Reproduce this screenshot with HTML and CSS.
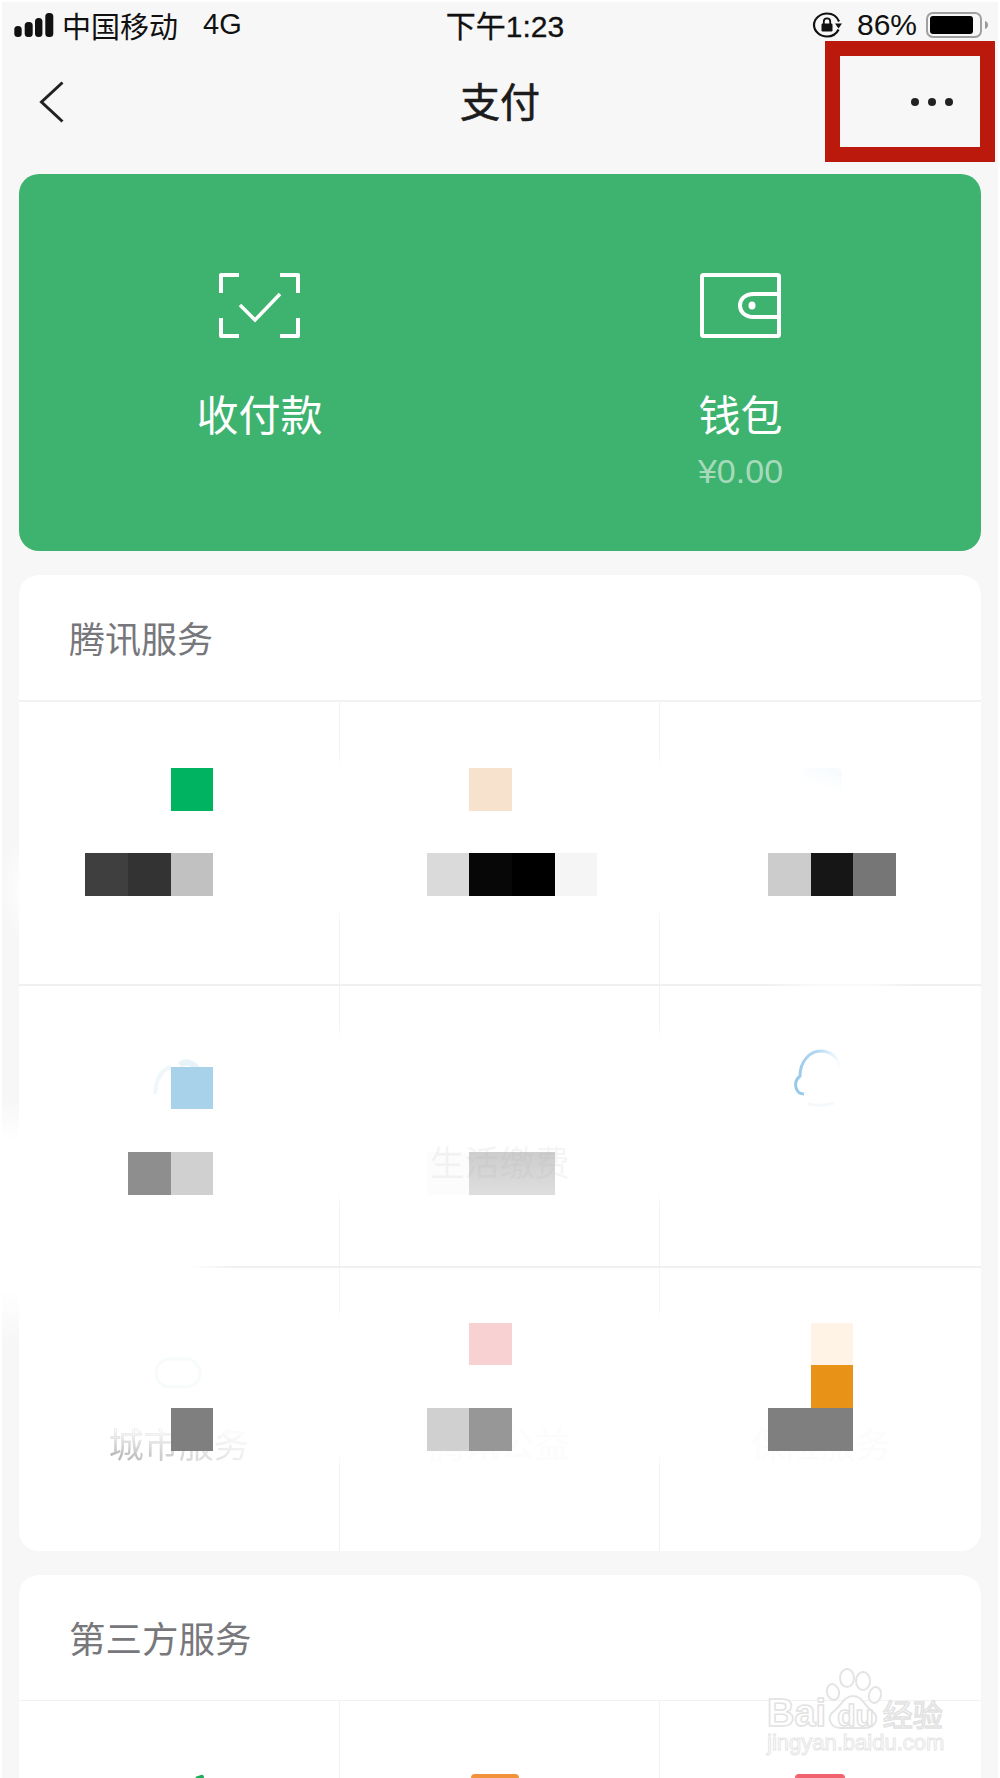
FILE: index.html
```html
<!DOCTYPE html>
<html lang="zh-CN">
  <head>
    <meta charset="UTF-8" />
    <meta name="viewport" content="width=device-width, initial-scale=1.0" />
    <title>支付</title>
    <link rel="stylesheet" href="styles.css">
  </head>
  <body>
    <div class="page">
      <div class="status-bar">
        <div class="status-left">
          <svg class="signal" width="40" height="24" viewBox="0 0 40 24">
            <rect x="0.3" y="13" width="7.4" height="11" rx="3.5" />
            <rect x="10.7" y="9" width="8" height="15" rx="3.5" />
            <rect x="21" y="5" width="7.4" height="19" rx="3.5" />
            <rect x="31.3" y="0" width="8" height="24" rx="3.5" />
          </svg>
          <span>中国移动</span>
          <span class="network">4G</span>
        </div>
        <div class="status-time">下午1:23</div>
        <div class="status-right">
          <svg class="lock" width="30" height="26" viewBox="0 0 30 26">
            <path d="M27 9.5C25 4.5 20.5 1.5 15 1.5 7.8 1.5 2 7 2 13s5.8 11.5 13 11.5c5 0 9.5-2.8 11.6-7" fill="none" stroke="#111" stroke-width="2.2" />
            <path d="M23 11.5h7l-3.5 5z" fill="#111" />
            <rect x="9.5" y="11.5" width="11" height="8" rx="1.2" fill="#111" />
            <path d="M11.8 12V9.5a3.2 3.2 0 0 1 6.4 0V12" fill="none" stroke="#111" stroke-width="1.8" />
          </svg>
          <span class="battery-text">86%</span>
          <svg class="battery" width="62" height="26" viewBox="0 0 62 26">
            <rect x="1" y="1" width="54" height="24" rx="6" fill="none" stroke="#a0a0a0" stroke-width="2" />
            <rect x="4" y="4" width="43" height="18" rx="3" fill="#000" />
            <path d="M59 9c1.8.5 3 2 3 4s-1.2 3.5-3 4z" fill="#9a9a9a" />
          </svg>
        </div>
      </div>

      <div class="nav">
        <svg class="back" width="30" height="44" viewBox="0 0 30 44">
          <path d="M24.5 2.5L3.5 22l21 19.5" fill="none" stroke="#222" stroke-width="3" />
        </svg>
        <h1>支付</h1>
        <div class="dots"><span></span><span></span><span></span></div>
      </div>

      <div class="pay-card">
        <div class="pay-item">
          <svg width="81" height="65" viewBox="0 0 81 65" fill="none" stroke="#fff" stroke-width="4">
            <path d="M20 2H2v18M61 2h18v18M2 45v18h18M79 45v18H61" stroke-linejoin="round" />
            <path d="M21 32l15 15 25-26" stroke-width="3.5" />
          </svg>
          <div class="pay-label">收付款</div>
        </div>
        <div class="pay-item">
          <svg width="81" height="65" viewBox="0 0 81 65" fill="none" stroke="#fff" stroke-width="4">
            <rect x="2" y="2" width="77" height="61" rx="1.5" />
            <path d="M79 21H54C44 21 40 27 40 32.5S44 44 54 44H79" />
            <ellipse cx="52" cy="32.5" rx="3.5" ry="4" fill="#fff" stroke="none" />
          </svg>
          <div class="pay-label">钱包</div>
          <div class="pay-amount">¥0.00</div>
        </div>
      </div>

      <div class="section">
        <div class="section-title">腾讯服务</div>
        <div class="row row-a">
          <div class="cell">
            <div class="mosaic">
              <i class="c3 r1 green"></i>
              <i class="c1 r3 g3f"></i><i class="c2 r3 g33"></i><i class="c3 r3 gc1"></i>
            </div>
          </div>
          <div class="cell cell-mid">
            <div class="mosaic">
              <i class="c2 r1 peach"></i>
              <i class="c1 r3 gda"></i><i class="c2 r3 g07"></i><i class="c3 r3 g00"></i><i class="c4 r3 gf5"></i>
            </div>
          </div>
          <div class="cell cell-end">
            <div class="ghost-glare"></div>
            <div class="mosaic">
              <i class="c1 r3 gcc"></i><i class="c2 r3 g16"></i><i class="c3 r3 g76"></i>
            </div>
          </div>
        </div>

        <div class="row row-b">
          <div class="cell">
            <svg class="ghost ghost-left" width="64" height="64" viewBox="0 0 64 64" fill="none">
              <path d="M4 40C5 26 9 16 20 13" stroke="#eff7fb" stroke-width="4" />
              <path d="M29 11C36 5 46 10 50 22" stroke="#e7f2f9" stroke-width="6" />
            </svg>
            <div class="mosaic">
              <i class="c3 r1 sky"></i>
              <i class="c2 r3 g8e"></i><i class="c3 r3 gd0"></i>
            </div>
          </div>
          <div class="cell cell-mid">
            <div class="mosaic">
              <i class="c1 r3 gfc"></i><i class="c2 r3 fade"></i><i class="c3 r3 fade"></i>
            </div>
            <div class="ghost-label on-top"><span>生活缴费</span></div>
          </div>
          <div class="cell cell-end">
            <svg class="ghost ghost-cloud" width="64" height="64" viewBox="0 0 64 64" fill="none">
              <defs>
                <linearGradient id="cloudArc" x1="0" x2="1" y1="0.5" y2="0.3">
                  <stop offset="0" stop-color="#98c9ea" />
                  <stop offset="0.6" stop-color="#b5daf1" />
                  <stop offset="1" stop-color="#ffffff" />
                </linearGradient>
              </defs>
              <path d="M16 49C8 49 4 38 12 31C12 16 22 6 33 6C42 6 50 12 53 22" stroke="url(#cloudArc)" stroke-width="3" />
              <path d="M20 59c8 2 16 2 26-1" stroke="#f5f9fc" stroke-width="3" />
            </svg>
          </div>
        </div>

        <div class="row row-c">
          <div class="cell">
            <svg class="ghost ghost-left" width="64" height="64" viewBox="0 0 64 64" fill="none">
              <rect x="5" y="6" width="44" height="28" rx="14" stroke="#f7fcfa" stroke-width="3" />
            </svg>
            <div class="ghost-label city"><span>城市服务</span></div>
            <div class="mosaic">
              <i class="c3 r3 g7f"></i>
            </div>
          </div>
          <div class="cell cell-mid">
            <div class="ghost-label dim"><span>腾讯公益</span></div>
            <div class="mosaic">
              <i class="c2 r1 pink"></i>
              <i class="c1 r3 gd0"></i><i class="c2 r3 g97"></i>
            </div>
          </div>
          <div class="cell cell-end">
            <div class="ghost-label dim"><span>保险服务</span></div>
            <div class="mosaic">
              <i class="c2 r1 cream"></i>
              <i class="c2 r2 orange"></i>
              <i class="c1 r3 g7f"></i><i class="c2 r3 g7f"></i>
            </div>
          </div>
        </div>
      </div>

      <div class="section section-third">
        <div class="section-title thin">第三方服务</div>
        <div class="row row-peek">
          <div class="cell"><div class="peek peek-green"></div></div>
          <div class="cell"><div class="peek peek-orange"></div></div>
          <div class="cell cell-end"><div class="peek peek-red"></div></div>
        </div>
      </div>

      <div class="smudge smudge-low"></div>
      <div class="smudge smudge-high"></div>

      <div class="mark-box"></div>

      <div class="watermark">
        <svg width="80" height="70" viewBox="0 0 80 70" fill="#fff" stroke="#e4e4e4" stroke-width="2">
          <ellipse cx="37" cy="14" rx="7" ry="9" />
          <ellipse cx="53" cy="17" rx="7" ry="9" />
          <ellipse cx="23" cy="28" rx="6" ry="8" transform="rotate(-15 23 28)" />
          <ellipse cx="65" cy="31" rx="6" ry="8" transform="rotate(15 65 31)" />
          <path d="M43 32C52 32 55 42 62 47C70 53 66 64 55 64H31C20 64 16 53 24 47C31 42 34 32 43 32Z" />
        </svg>
        <div class="mark-top"><span class="mark-bai">Bai</span><span class="mark-du">du</span><span class="mark-jy">经验</span></div>
        <div class="mark-url">jingyan.baidu.com</div>
      </div>
    </div>
  </body>
</html>
```

FILE: styles.css
```css
html,
body {
  height: 1778px;
  overflow: hidden;
}
body {
  margin: 0;
  background: #fff;
  font-family: "Liberation Sans", "Noto Sans CJK SC", sans-serif;
  color: #111;
}
.page {
  position: relative;
  height: 1776px;
  margin: 2px 2px 0;
  background: #f7f7f7;
  overflow: hidden;
}

/* status bar */
.status-bar {
  display: grid;
  grid-template-columns: 1fr auto 1fr;
  align-items: center;
  height: 44px;
  padding: 0 10px 2px 12px;
  font-size: 29px;
}
.status-left {
  display: flex;
  align-items: center;
  gap: 8px;
}
.signal {
  fill: #111;
}
.network {
  margin-left: 17px;
}
.status-time {
  font-size: 30px;
  padding-left: 8px;
  margin-bottom: 1px;
  -webkit-text-stroke: 0.3px #111;
}
.status-right {
  display: flex;
  justify-content: flex-end;
  align-items: center;
}
.battery-text {
  font-size: 30px;
  margin: 0 9px 0 15px;
}

/* nav */
.nav {
  display: grid;
  grid-template-columns: 1fr auto 1fr;
  align-items: center;
  height: 108px;
  padding: 0 45px;
}
.back {
  margin-left: -9px;
}
.nav h1 {
  margin: 0 0 4px;
  font-size: 40px;
  font-weight: 400;
  color: #1c1c1c;
  -webkit-text-stroke: 0.6px #1c1c1c;
}
.dots {
  display: flex;
  justify-content: flex-end;
  gap: 9px;
}
.dots span {
  width: 8px;
  height: 8px;
  border-radius: 50%;
  background: #222;
}

/* green card */
.pay-card {
  display: grid;
  grid-template-columns: 1fr 1fr;
  height: 377px;
  margin: 18px 17px 24px;
  padding-top: 99px;
  box-sizing: border-box;
  border-radius: 20px;
  background: #3eb370;
  color: #fff;
}
.pay-item {
  display: flex;
  flex-direction: column;
  align-items: center;
}
.pay-label {
  margin-top: 54px;
  font-size: 42px;
  line-height: 50px;
}
.pay-amount {
  margin-top: 12px;
  font-size: 34px;
  line-height: 34px;
  color: #a6dabb;
}

/* service sections */
.section {
  margin: 0 17px 24px;
  border-radius: 20px;
  background: #fff;
  overflow: hidden;
}
.section-title {
  height: 125px;
  padding-left: 50px;
  font-size: 36px;
  line-height: 132px;
  color: #77777c;
  border-bottom: 2px solid #f2f2f2;
}
.section-title.thin {
  border-bottom-width: 1px;
  font-size: 36.5px;
}
.row {
  display: grid;
  grid-template-columns: repeat(3, 1fr);
  box-sizing: border-box;
  border-bottom: 2px solid #f0f0f0;
}
.row-a {
  height: 284px;
  border-image: linear-gradient(to right, #f0f0f0 745px, #fafafa 800px, #fafafa 850px, #f0f0f0 890px) 1;
}
.row-b {
  height: 282px;
  border-image: linear-gradient(to right, transparent 170px, #f0f0f0 215px) 1;
}
.row-c {
  height: 283px;
  border-bottom: none;
}
.row-peek {
  height: 120px;
  border-bottom: none;
}
.cell {
  display: grid;
  box-sizing: border-box;
  border-right: 1.5px solid #f2f2f2;
}
.cell > * {
  grid-area: 1 / 1;
}
.cell-end {
  border-right: none;
}
.row-a .cell {
  border-image: linear-gradient(#f2f2f2 50px, transparent 65px, transparent 205px, #f2f2f2 220px) 1;
}
.row-b .cell {
  border-image: linear-gradient(#f2f2f2 40px, transparent 55px, transparent 205px, #f2f2f2 220px) 1;
}
.row-c .cell {
  border-image: linear-gradient(#f5f5f5 40px, transparent 55px, transparent 185px, #f2f2f2 200px) 1;
}

/* blocks */
.mosaic {
  display: grid;
  grid-template-columns: repeat(4, 42.667px);
  grid-template-rows: repeat(3, 42.667px);
  align-self: start;
  justify-self: start;
  margin-left: 66.33px;
}
.cell-mid .mosaic {
  margin-left: 87px;
}
.cell-end .mosaic {
  margin-left: 107.67px;
}
.row-a .mosaic {
  margin-top: 66px;
}
.row-b .mosaic {
  margin-top: 80.67px;
}
.row-c .mosaic {
  margin-top: 54.67px;
}
.c1 { grid-column: 1; }
.c2 { grid-column: 2; }
.c3 { grid-column: 3; }
.c4 { grid-column: 4; }
.r1 { grid-row: 1; }
.r2 { grid-row: 2; }
.r3 { grid-row: 3; }
.green { background: #00b360; }
.peach { background: #f7e2cd; }
.sky { background: #a8d1ea; }
.pink { background: #f8d2d3; }
.cream { background: #fef3e5; }
.orange { background: #e89318; }
.fade { background: linear-gradient(#cdcdcd, #dedede); }
.g00 { background: #000; }
.g07 { background: #070707; }
.g16 { background: #161616; }
.g33 { background: #333; }
.g3f { background: #3f3f3f; }
.g76 { background: #767676; }
.g7f { background: #7f7f7f; }
.g8e { background: #8e8e8e; }
.g97 { background: #979797; }
.gc1 { background: #c1c1c1; }
.gcc { background: #ccc; }
.gd0 { background: #d0d0d0; }
.gda { background: #dadada; }
.gf5 { background: #f5f5f5; }
.gfc { background: #fcfcfc; }

/* what is still visible under the blocks */
.ghost-label {
  align-self: start;
  margin-top: 153px;
  text-align: center;
  font-size: 35px;
  line-height: 50px;
}
.ghost-label span {
  display: inline-block;
}
.ghost-label.on-top span {
  color: rgba(170, 170, 170, 0.12);
}
.ghost-label.city span {
  background: linear-gradient(#fff 15%, rgba(255, 255, 255, 0) 70%), linear-gradient(100deg, #b4b4b4, #f4f4f4);
  -webkit-background-clip: text;
  background-clip: text;
  color: transparent;
}
.ghost-label.dim span {
  color: #fcfcfc;
}
.ghost {
  align-self: start;
  justify-self: start;
  margin-top: 68px;
  margin-left: 132px;
}
.row-c .ghost {
  margin-top: 85px;
}
.ghost-cloud {
  margin-top: 59px;
  margin-left: 128px;
}
.ghost-glare {
  align-self: start;
  justify-self: start;
  width: 40px;
  height: 26px;
  margin: 66px 0 0 142px;
  background: linear-gradient(200deg, #f6fafd, #fff 70%);
  border-radius: 6px;
}

/* second card, cut off by the window */
.peek {
  justify-self: start;
  height: 10px;
  margin-top: 73px;
  border-radius: 4px 4px 0 0;
}
.peek-green {
  width: 9px;
  margin-left: 176px;
  background: #1aad5c;
  clip-path: polygon(0 30%, 100% 0, 100% 100%);
}
.peek-orange {
  width: 48px;
  margin-left: 131px;
  background: #f2923a;
}
.peek-red {
  width: 50px;
  margin-left: 135px;
  background: #f0626e;
}

/* white smears on the left edge */
.smudge {
  position: absolute;
  left: -2px;
  width: 21px;
}
.smudge-low {
  top: 1098px;
  height: 242px;
  background: linear-gradient(rgba(255, 255, 255, 0), #fff 40px, #fff 190px, rgba(255, 255, 255, 0));
}
.smudge-high {
  top: 838px;
  height: 100px;
  background: radial-gradient(ellipse at right, rgba(255, 255, 255, 0.8), rgba(255, 255, 255, 0) 70%);
}

/* red annotation */
.mark-box {
  position: absolute;
  left: 823px;
  top: 39px;
  width: 170px;
  height: 121px;
  box-sizing: border-box;
  border: 15px solid #bb190c;
}

/* baidu watermark */
.watermark {
  position: absolute;
  left: 765px;
  top: 1666px;
  width: 182px;
  height: 98px;
  color: #fff;
}
.watermark svg {
  position: absolute;
  left: 43px;
  top: -4px;
}
.mark-top {
  position: absolute;
  top: 26px;
  left: 0;
  display: flex;
  align-items: baseline;
  line-height: 38px;
  white-space: nowrap;
  -webkit-text-stroke: 1.5px #e2e2e2;
  font-weight: 700;
}
.mark-bai {
  font-size: 38px;
}
.mark-du {
  margin-left: 11px;
  font-size: 30px;
}
.mark-jy {
  margin-left: 9px;
  font-size: 30px;
  font-weight: 400;
}
.mark-url {
  position: absolute;
  top: 61px;
  left: 0;
  font-size: 22px;
  line-height: 28px;
  white-space: nowrap;
  -webkit-text-stroke: 1px #e6e6e6;
}
```
